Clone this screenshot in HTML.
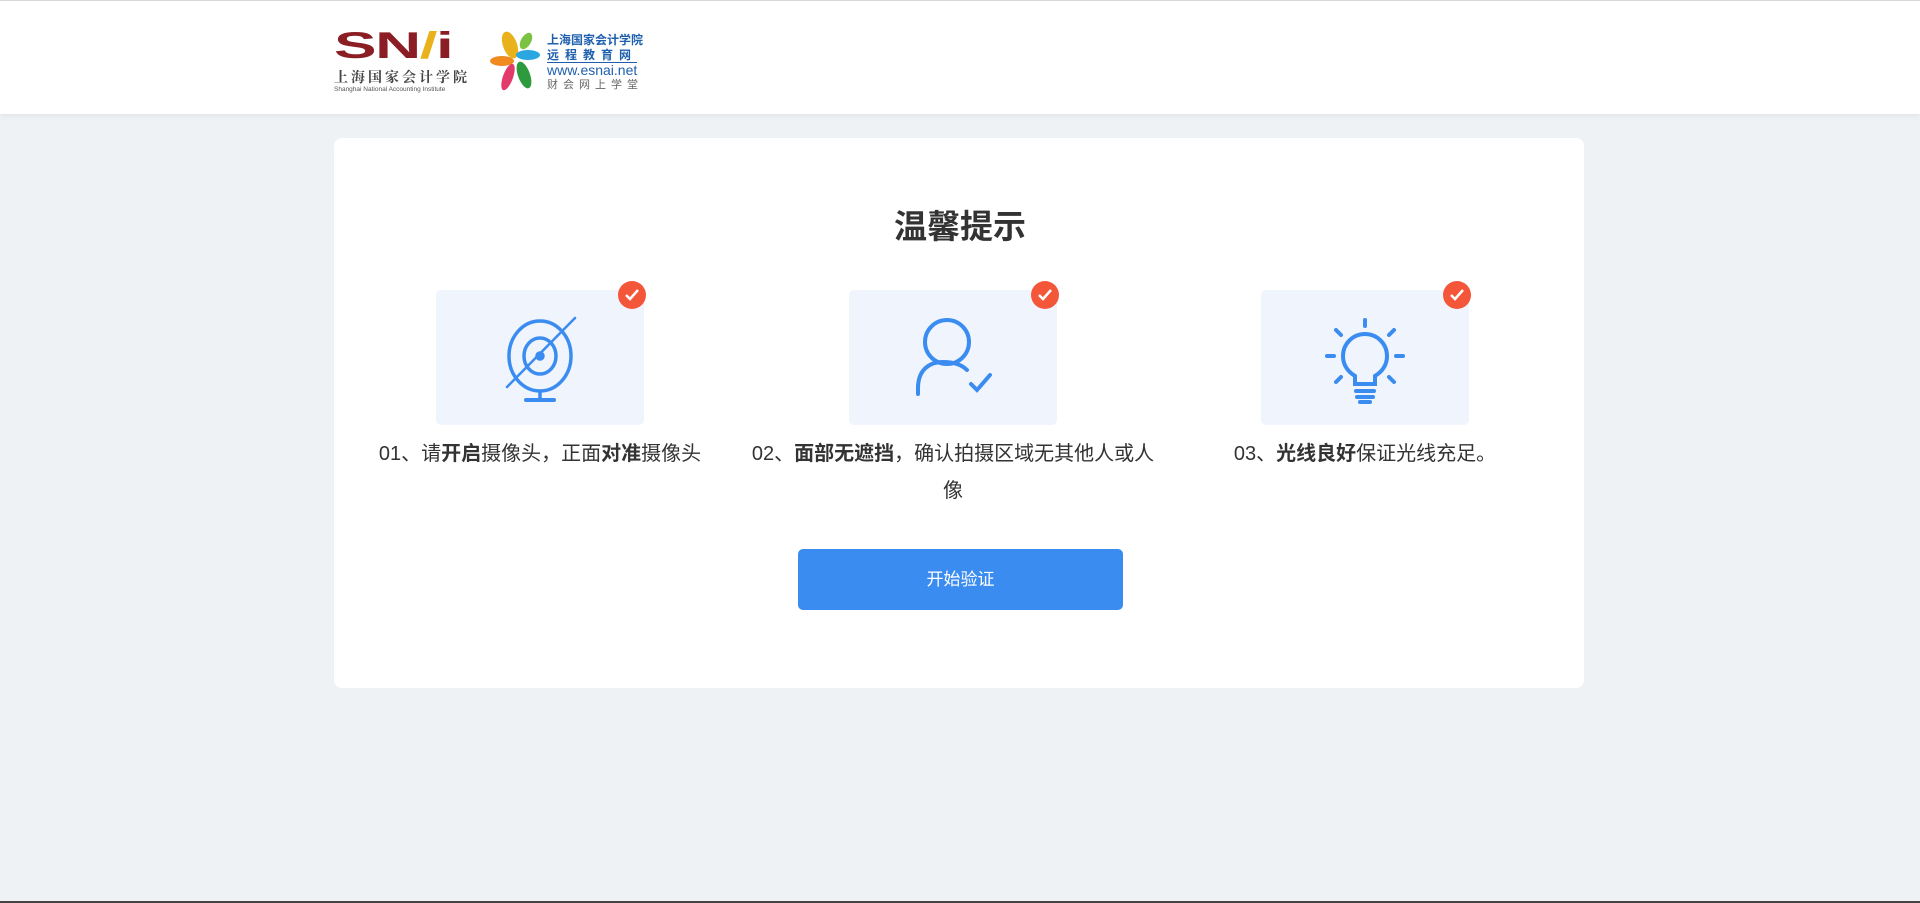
<!DOCTYPE html>
<html><head><meta charset="utf-8"><style>
*{margin:0;padding:0;box-sizing:border-box}
body{width:1920px;height:903px;background:#eef2f4;font-family:"Liberation Sans","Noto Sans CJK SC",sans-serif;position:relative;overflow:hidden;color:#333}
.hdr{position:absolute;left:0;top:0;width:1920px;height:114px;background:#fff;border-top:1px solid #d8d8d8;box-shadow:0 2px 6px rgba(0,0,0,.06)}
.card{position:absolute;left:334px;top:138px;width:1250px;height:550px;background:#fff;border-radius:8px}
h1{position:absolute;left:0;width:100%;top:200px;text-align:center;font-size:33px;font-weight:bold;color:#333}
.box{position:absolute;top:290px;width:208px;height:135px;background:#eff4fd;border-radius:5px}
.box svg.ic{position:absolute;left:0;top:0;overflow:visible}
.badge{position:absolute;right:-2px;top:-9px;width:28px;height:28px}
.txt{position:absolute;top:436px;width:440px;text-align:center;font-size:20px;line-height:37px;color:#333}
.txt b{font-weight:bold}
.btn{position:absolute;left:798px;top:549px;width:325px;height:61px;background:#3a8cf0;border-radius:5px;color:#fff;font-size:17px;text-align:center;line-height:61px}
</style></head><body>
<div class="hdr">
 <div style="position:absolute;left:334px;top:22px;width:136px;height:78px">
  <div style="font-family:'Liberation Sans',sans-serif;font-weight:bold;font-size:44px;color:#8b1e24;line-height:46px;transform:scaleX(1.45) scaleY(0.85);transform-origin:0 50%;letter-spacing:-1px">SN<span style="color:#e9b21b">/</span>i</div>
  <div style="font-size:14px;color:#444;letter-spacing:3px;line-height:17px;font-weight:bold;font-family:'Noto Serif CJK SC',serif;white-space:nowrap">上海国家会计学院</div>
  <div style="font-size:6.5px;color:#555;line-height:8px;white-space:nowrap">Shanghai National Accounting Institute</div>
 </div>
 <div style="position:absolute;left:490px;top:30px;width:170px;height:66px">
  <svg width="52" height="64" viewBox="0 0 52 64" style="position:absolute;left:0;top:0">
   <ellipse cx="20" cy="14" rx="7" ry="14" fill="#e9b21b" transform="rotate(-20 20 14)"/>
   <ellipse cx="38" cy="24" rx="12" ry="5" fill="#2aa7e0"/>
   <ellipse cx="12" cy="30" rx="12" ry="5" fill="#f08a1f"/>
   <ellipse cx="34" cy="44" rx="6" ry="14" fill="#2e9a3e" transform="rotate(-20 34 44)"/>
   <ellipse cx="18" cy="46" rx="5" ry="14" fill="#e23b6a" transform="rotate(20 18 46)"/>
   <ellipse cx="36" cy="10" rx="5" ry="9" fill="#7cc242" transform="rotate(30 36 10)"/>
  </svg>
  <div style="position:absolute;left:57px;top:2px;font-size:12px;line-height:14px;color:#1e5fae;font-weight:bold">上海国家会计学院</div>
  <div style="position:absolute;left:57px;top:17px;font-size:12px;line-height:14px;color:#1e5fae;letter-spacing:6px;font-weight:bold;border-bottom:1px solid #1e5fae">远程教育网</div>
  <div style="position:absolute;left:57px;top:31px;font-size:14px;line-height:16px;color:#1e5fae">www.esnai.net</div>
  <div style="position:absolute;left:57px;top:48px;font-size:11px;line-height:13px;color:#666;letter-spacing:5px">财会网上学堂</div>
 </div>
</div>
<div class="card"></div>
<h1>温馨提示</h1>

<div class="box" style="left:436px">
 <svg class="ic" width="208" height="135" viewBox="0 0 208 135" fill="none" stroke="#3a8cf0" stroke-width="3.5" stroke-linecap="round">
  <ellipse cx="104" cy="66" rx="31" ry="35"/><ellipse cx="104" cy="66" rx="16" ry="18"/><circle cx="104" cy="66" r="3" fill="#3a8cf0"/>
  <line x1="71" y1="97" x2="139" y2="28" stroke-width="2.5"/>
  <line x1="104" y1="101" x2="104" y2="108"/>
  <line x1="90" y1="110" x2="118" y2="110" stroke-width="4"/>
 </svg>
 <svg class="badge" viewBox="0 0 28 28"><circle cx="14" cy="14" r="14" fill="#f4563a"/><path d="M8 14l4 4 8-9" stroke="#fff" stroke-width="2.5" fill="none"/></svg>
</div>
<div class="box" style="left:849px">
 <svg class="ic" width="208" height="135" viewBox="0 0 208 135" fill="none" stroke="#3a8cf0" stroke-width="4" stroke-linecap="round">
  <ellipse cx="98" cy="52" rx="22" ry="22"/>
  <path d="M69 104 V 98 C69 80 80 72 94 72 C104 72 112 74 118 80"/>
  <path d="M122 94l6 6 13-15"/>
 </svg>
 <svg class="badge" viewBox="0 0 28 28"><circle cx="14" cy="14" r="14" fill="#f4563a"/><path d="M8 14l4 4 8-9" stroke="#fff" stroke-width="2.5" fill="none"/></svg>
</div>
<div class="box" style="left:1261px">
 <svg class="ic" width="208" height="135" viewBox="-64 -26 208 135" fill="none" stroke="#3a8cf0" stroke-width="4" stroke-linecap="round">
  <path d="M30 68 V60 C22 55 18 48 18 40 A22 22 0 0 1 62 40 C62 48 58 55 50 60 V68 Z"/>
  <line x1="31" y1="75" x2="49" y2="75"/><line x1="32" y1="81" x2="48" y2="81"/><line x1="35" y1="86" x2="45" y2="86"/>
  <line x1="40" y1="4" x2="40" y2="10"/><line x1="11" y1="14" x2="16" y2="19"/><line x1="69" y1="14" x2="64" y2="19"/>
  <line x1="2" y1="40" x2="9" y2="40"/><line x1="71" y1="40" x2="78" y2="40"/>
  <line x1="11" y1="66" x2="16" y2="61"/><line x1="69" y1="66" x2="64" y2="61"/>
 </svg>
 <svg class="badge" viewBox="0 0 28 28"><circle cx="14" cy="14" r="14" fill="#f4563a"/><path d="M8 14l4 4 8-9" stroke="#fff" stroke-width="2.5" fill="none"/></svg>
</div>

<div class="txt" style="left:320px">01、请<b>开启</b>摄像头，正面<b>对准</b>摄像头</div>
<div class="txt" style="left:748px;width:410px">02、<b>面部无遮挡</b>，确认拍摄区域无其他人或人像</div>
<div class="txt" style="left:1145px">03、<b>光线良好</b>保证光线充足。</div>

<div class="btn">开始验证</div>
<div style="position:absolute;left:0;top:901px;width:1920px;height:2px;background:#444"></div>
</body></html>
